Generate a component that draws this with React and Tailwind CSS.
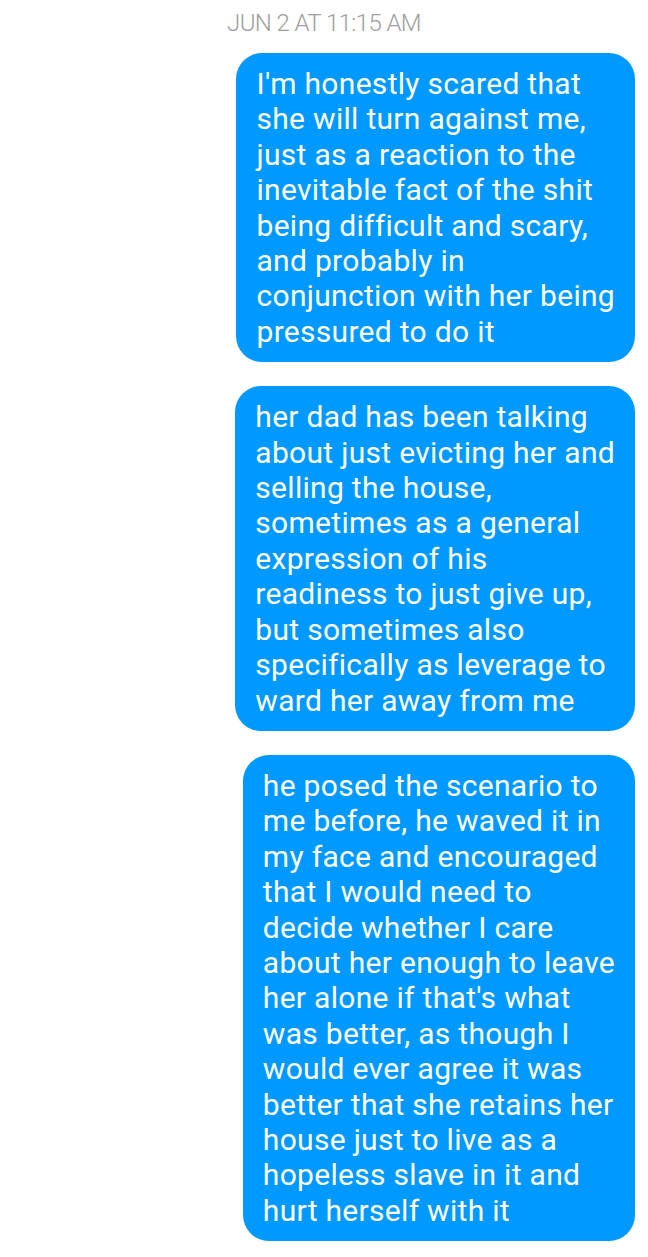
const MESSAGES = [
  [
    "I'm honestly scared that",
    'she will turn against me,',
    'just as a reaction to the',
    'inevitable fact of the shit',
    'being difficult and scary,',
    'and probably in',
    'conjunction with her being',
    'pressured to do it',
  ],
  [
    'her dad has been talking',
    'about just evicting her and',
    'selling the house,',
    'sometimes as a general',
    'expression of his',
    'readiness to just give up,',
    'but sometimes also',
    'specifically as leverage to',
    'ward her away from me',
  ],
  [
    'he posed the scenario to',
    'me before, he waved it in',
    'my face and encouraged',
    'that I would need to',
    'decide whether I care',
    'about her enough to leave',
    "her alone if that's what",
    'was better, as though I',
    'would ever agree it was',
    'better that she retains her',
    'house just to live as a',
    'hopeless slave in it and',
    'hurt herself with it',
  ],
]

function Bubble({ lines }) {
  return (
    <div className="self-end w-fit rounded-[26px] bg-[#0099ff] px-5 py-[13px] text-white text-[30px] tracking-[0.3px] leading-[35.4px]">
      {lines.map((l, i) => (
        <div key={i} className="whitespace-nowrap">{l}</div>
      ))}
    </div>
  )
}

export default function App() {
  return (
    <div
      className="w-[648px] h-[1257px] bg-white flex flex-col overflow-hidden"
      style={{ fontFamily: 'Roboto, "Noto Sans", sans-serif' }}
    >
      <div className="text-center text-[#9e9e9e] font-light text-[24px] tracking-[-0.6px] leading-[24px] pt-[11px] pb-[18px]">
        JUN 2 AT 11:15 AM
      </div>
      <div className="flex flex-col gap-6 pr-[13px]">
        {MESSAGES.map((m, i) => (
          <Bubble key={i} lines={m} />
        ))}
      </div>
    </div>
  )
}
